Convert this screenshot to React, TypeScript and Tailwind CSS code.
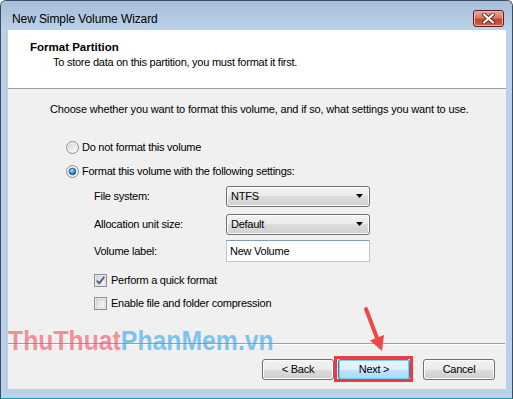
import React from "react";

function Radio({ checked }: { checked?: boolean }) {
  return (
    <svg width="13" height="13" viewBox="0 0 13 13" className="shrink-0">
      <defs>
        <linearGradient id={checked ? "rg1" : "rg0"} x1="0" y1="0" x2="1" y2="1">
          <stop offset="0" stopColor="#d4d4d4" />
          <stop offset="1" stopColor="#fdfdfd" />
        </linearGradient>
        <radialGradient id="dot" cx="0.4" cy="0.35" r="0.7">
          <stop offset="0" stopColor="#b6ecff" />
          <stop offset="0.5" stopColor="#3a9ad8" />
          <stop offset="1" stopColor="#164f8c" />
        </radialGradient>
      </defs>
      <circle cx="6.5" cy="6.5" r="6" fill="#f4f4f4" stroke="#8a8a8a" strokeWidth="1" />
      <circle cx="6.5" cy="6.5" r="4.6" fill={`url(#${checked ? "rg1" : "rg0"})`} />
      {checked && <circle cx="6.5" cy="6.5" r="3.3" fill="url(#dot)" stroke="#1c4f86" strokeWidth="0.8" />}
    </svg>
  );
}

function Check({ checked }: { checked?: boolean }) {
  return (
    <svg width="13" height="13" viewBox="0 0 13 13" className="shrink-0">
      <defs>
        <linearGradient id="cg" x1="0" y1="0" x2="1" y2="1">
          <stop offset="0" stopColor="#d6d6d6" />
          <stop offset="1" stopColor="#fbfbfb" />
        </linearGradient>
      </defs>
      <rect x="0.5" y="0.5" width="12" height="12" fill="#f6f6f6" stroke="#8e8f8f" />
      <rect x="2" y="2" width="9" height="9" fill="url(#cg)" stroke="#c4c4c4" strokeWidth="0.6" />
      {checked && (
        <path d="M2.8 6.6 L5.3 9.4 L10.2 2.9" fill="none" stroke="#4a5d8c" strokeWidth="1.8" strokeLinejoin="round" />
      )}
    </svg>
  );
}

function Combo({ value }: { value: string }) {
  return (
    <div className="w-[144px] h-[21px] rounded-[3px] border border-[#707070] bg-[linear-gradient(#f2f2f2_0%,#ebebeb_50%,#dddddd_50%,#cfcfcf_100%)] shadow-[inset_0_0_0_1px_#fbfbfb] flex items-center justify-between pl-[4px] pr-[5px]">
      <span className="leading-[15px]">{value}</span>
      <svg width="8" height="5" viewBox="0 0 8 5">
        <path d="M0 0 H7 L3.5 4 Z" fill="#000" />
      </svg>
    </div>
  );
}

export default function App() {
  return (
    <div className="w-[513px] h-[399px] bg-white font-['Liberation_Sans',Arial,sans-serif] text-[11px] tracking-[-0.25px] text-black">
      <div className="relative w-[513px] h-[399px] flex flex-col rounded-t-[6px] border border-[#3d4c5e] border-b-[#2a93ad] bg-[#bad1e9] overflow-hidden">
        {/* title bar */}
        <div className="h-[29px] flex justify-between bg-[linear-gradient(#a6bed9,#bcd2e9)] shrink-0">
          <div className="pl-[11px] pt-[11px] text-[12px] leading-[15px] tracking-[-0.1px]">New Simple Volume Wizard</div>
          <div className="mt-[9px] mr-[8px] w-[31px] h-[17px] rounded-[3px] border border-[#5a1c1c] bg-[linear-gradient(#e9a797_0%,#dc7a66_45%,#c4442c_55%,#d0604a_100%)] shadow-[inset_0_0_0_1px_#eeb2a6] flex items-center justify-center">
            <svg width="13" height="11" viewBox="0 0 13 11">
              <path d="M2 1.5 L11 9.5 M11 1.5 L2 9.5" stroke="#5d2a2a" strokeWidth="4" strokeLinecap="round" />
              <path d="M2 1.5 L11 9.5 M11 1.5 L2 9.5" stroke="#ffffff" strokeWidth="2.2" strokeLinecap="round" />
            </svg>
          </div>
        </div>

        {/* content */}
        <div className="ml-[7px] mr-[6px] mb-[9px] flex-1 flex flex-col">
          <div className="h-[59px] bg-white border-b border-[#a0a0a0] pt-[10px]">
            <div className="pl-[22px] font-bold text-[11.5px] leading-[15px] tracking-normal">Format Partition</div>
            <div className="pl-[45px] leading-[15px]">To store data on this partition, you must format it first.</div>
          </div>

          <div className="flex-1 bg-[#f0f0f0] flex flex-col pt-[13px]">
            <div className="pl-[42px] leading-[15px] h-[15px] tracking-[-0.17px]">
              Choose whether you want to format this volume, and if so, what settings you want to use.
            </div>

            <div className="mt-[22px] h-[16px] pl-[58px] flex items-center gap-[3px]">
              <Radio />
              <span className="leading-[15px]">Do not format this volume</span>
            </div>
            <div className="mt-[8px] h-[16px] pl-[58px] flex items-center gap-[3px]">
              <Radio checked />
              <span className="leading-[15px]">Format this volume with the following settings:</span>
            </div>

            <div className="mt-[7px] h-[21px] pl-[86px] flex items-center">
              <span className="w-[132px] leading-[15px]">File system:</span>
              <Combo value="NTFS" />
            </div>
            <div className="mt-[7px] h-[21px] pl-[86px] flex items-center">
              <span className="w-[132px] leading-[15px]">Allocation unit size:</span>
              <Combo value="Default" />
            </div>
            <div className="mt-[5px] h-[22px] pl-[86px] flex items-center">
              <span className="w-[132px] leading-[15px]">Volume label:</span>
              <div className="w-[144px] h-[22px] bg-white border border-[#b4c9e0] border-t-[#7f9db9] pl-[3px] flex items-center leading-[15px]">
                New Volume
              </div>
            </div>

            <div className="mt-[12px] h-[13px] pl-[86px] flex items-center gap-[4px]">
              <Check checked />
              <span className="leading-[15px]">Perform a quick format</span>
            </div>
            <div className="mt-[10px] h-[13px] pl-[86px] flex items-center gap-[4px]">
              <Check />
              <span className="leading-[15px]">Enable file and folder compression</span>
            </div>

            <div className="mt-[33px] h-[2px] border-t border-[#a0a0a0] border-b border-b-white mr-[1px]" />

            <div className="mt-[14px] h-[21px] flex justify-end pr-[11px]">
              <div className="w-[72px] h-[21px] rounded-[3px] border border-[#707070] bg-[linear-gradient(#f2f2f2_0%,#ebebeb_50%,#dddddd_50%,#cfcfcf_100%)] shadow-[inset_0_0_0_1px_#fbfbfb] flex items-center justify-center leading-[15px]">
                &lt; Back
              </div>
              <div className="relative ml-[4px] w-[72px] h-[21px] rounded-[3px] border border-[#3c7fb1] bg-[linear-gradient(#eaf6fd_0%,#d9f0fc_50%,#bee6fd_50%,#a7d9f5_100%)] shadow-[inset_0_0_0_1px_#6fd3f4] flex items-center justify-center leading-[15px]">
                Next &gt;
                <div className="absolute left-[-5px] right-[-4px] top-[-4px] bottom-[-3px] border-[3px] border-[#ee3a44]" />
              </div>
              <div className="ml-[13px] w-[72px] h-[21px] rounded-[3px] border border-[#707070] bg-[linear-gradient(#f2f2f2_0%,#ebebeb_50%,#dddddd_50%,#cfcfcf_100%)] shadow-[inset_0_0_0_1px_#fbfbfb] flex items-center justify-center leading-[15px]">
                Cancel
              </div>
            </div>
          </div>
        </div>

        {/* watermark overlay */}
        <div className="absolute left-[7px] top-[324px] origin-left scale-x-[0.885] font-bold text-[28px] leading-[32px] tracking-normal whitespace-nowrap pointer-events-none">
          <span className="text-[#f34b62]/60">ThuThuat</span>
          <span className="text-[#2fa5f0]/60">PhanMem.vn</span>
        </div>

        {/* red arrow */}
        <svg className="absolute left-[359px] top-[303px] pointer-events-none" width="30" height="52" viewBox="359 303 30 52">
          <path d="M365 308 L376 337" stroke="#f04848" strokeWidth="4" strokeLinecap="round" />
          <path d="M381 350 L383 334 L369 339.5 Z" fill="#f04848" />
        </svg>
      </div>
    </div>
  );
}
